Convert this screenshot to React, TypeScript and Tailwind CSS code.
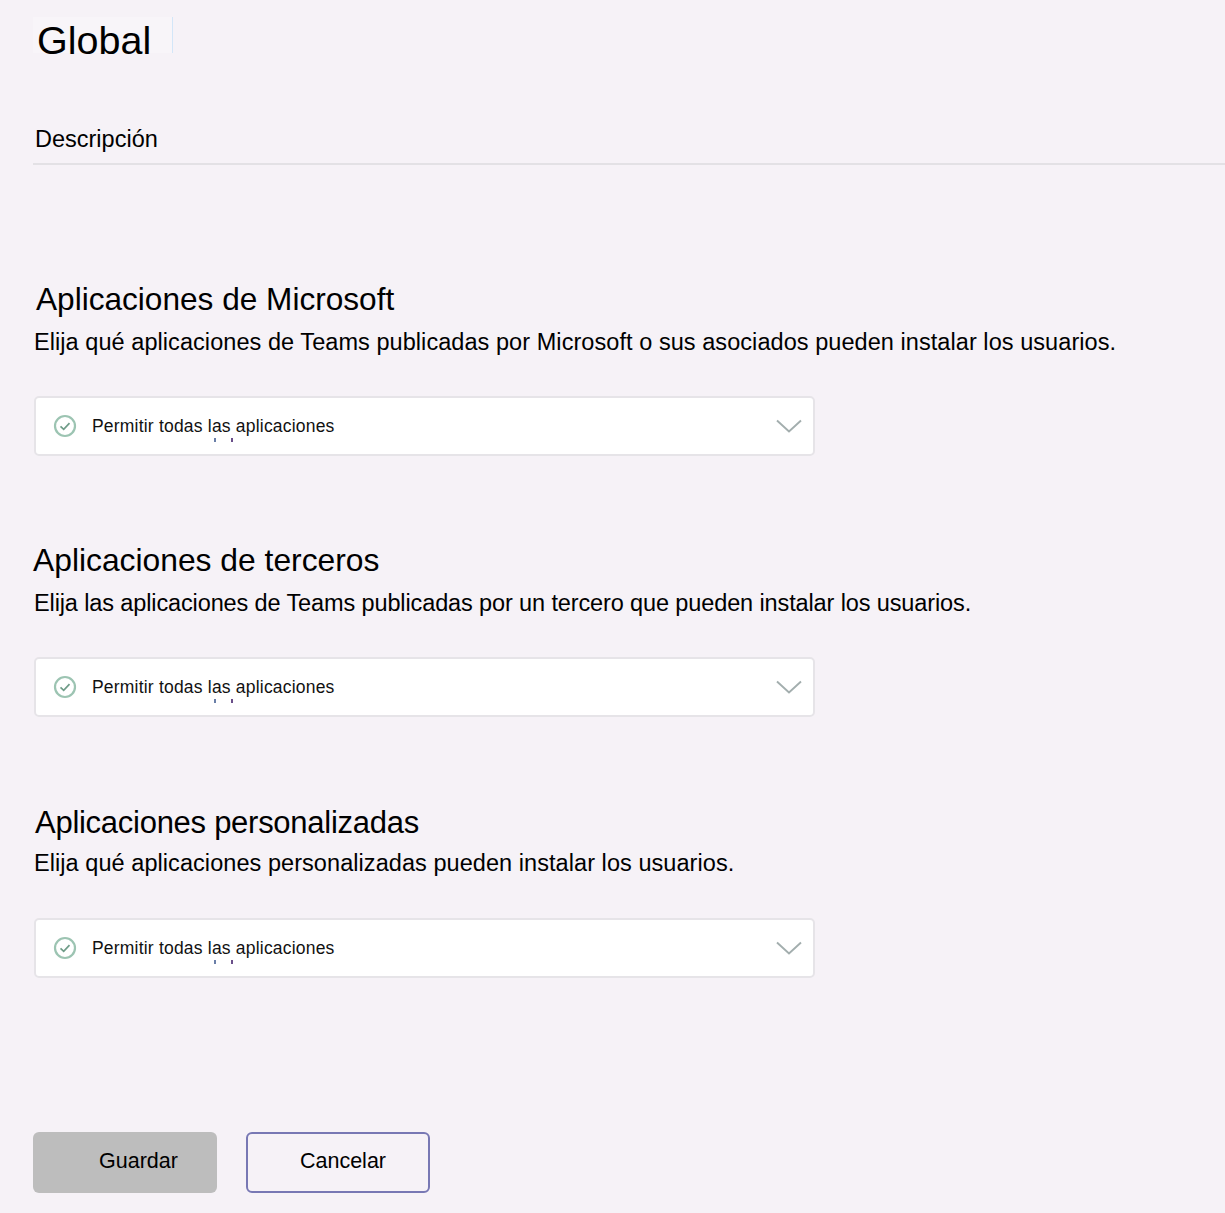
const font = { fontFamily: '"Liberation Sans", Arial, sans-serif' };

const sections = [
  {
    title: "Aplicaciones de Microsoft",
    text: "Elija qué aplicaciones de Teams publicadas por Microsoft o sus asociados pueden instalar los usuarios.",
    sectionClass: "pt-0",
    titleClass: "pl-[3px] text-[31.6px]",
    textClass: "mt-[10px] mb-[40px] tracking-[0.06px]",
  },
  {
    title: "Aplicaciones de terceros",
    text: "Elija las aplicaciones de Teams publicadas por un tercero que pueden instalar los usuarios.",
    sectionClass: "pt-0",
    titleClass: "pl-0 text-[31.8px]",
    textClass: "mt-[10px] mb-[40px] tracking-[-0.12px]",
  },
  {
    title: "Aplicaciones personalizadas",
    text: "Elija qué aplicaciones personalizadas pueden instalar los usuarios.",
    sectionClass: "pt-[2px]",
    titleClass: "pl-[2px] text-[31px] tracking-[-0.27px]",
    textClass: "mt-[7px] mb-[41px] tracking-[0.06px]",
  },
];

function CheckIcon() {
  return (
    <svg width="24" height="24" viewBox="0 0 24 24" fill="none" className="shrink-0">
      <circle cx="12" cy="12" r="10" stroke="#9cc4b2" strokeWidth="2.2" />
      <path d="M7.5 12.3l3.2 3 5.8-6.2" stroke="#6f9c88" strokeWidth="1.7" />
    </svg>
  );
}

function Chevron() {
  return (
    <svg width="26" height="14" viewBox="0 0 26 14" fill="none">
      <path d="M1 1.5l12 11 12-11" stroke="#a3aeae" strokeWidth="1.9" />
    </svg>
  );
}

function PolicySelect() {
  return (
    <div className="w-[781px] h-[60px] ml-px bg-white rounded-[5px] border-2 border-[#e6e4e8] flex items-center pl-[17px] pr-[11px]">
      <CheckIcon />
      <span className="relative ml-[15px] text-[17.5px] tracking-[0.2px] text-[#111]">
        Permitir todas las aplicaciones
        <span className="absolute left-[122px] top-[25px] w-[2px] h-[4px] bg-[#6a7fa8]" />
        <span className="absolute left-[139px] top-[25px] w-[2px] h-[4px] bg-[#6a4f8a]" />
      </span>
      <span className="ml-auto"><Chevron /></span>
    </div>
  );
}

export default function App() {
  return (
    <div style={font} className="w-full h-[1213px] bg-[#f6f2f7] text-black pl-[33px] overflow-hidden">
      <div className="pt-[17px]">
        <h1 className="w-[140px] h-[36px] pl-[4px] text-[39.5px] leading-[46px] font-normal bg-[#f8f5f9] border-r border-[#d3e6f8]">Global</h1>
      </div>

      <div className="mt-[72px] pb-[10px] pl-[2px] border-b-2 border-[#e3e1e5] text-[23.5px] leading-[28px]">Descripción</div>

      <div className="mt-[115px] flex flex-col gap-[85px]">
        {sections.map((s) => (
          <section key={s.title} className={s.sectionClass}>
            <h2 className={`${s.titleClass} leading-[38px] font-normal`}>{s.title}</h2>
            <p className={`${s.textClass} pl-px text-[23.5px] leading-[28px]`}>{s.text}</p>
            <PolicySelect />
          </section>
        ))}
      </div>

      <div className="mt-[154px] flex gap-[29px] text-[21.5px]">
        <button className="w-[184px] h-[61px] rounded-[6px] bg-[#bdbdbd] pl-[27px] pb-[3px] text-center">Guardar</button>
        <button className="w-[184px] h-[61px] rounded-[6px] border-2 border-[#7878b4] pl-[10px] pb-[3px] text-center">Cancelar</button>
      </div>
    </div>
  );
}
